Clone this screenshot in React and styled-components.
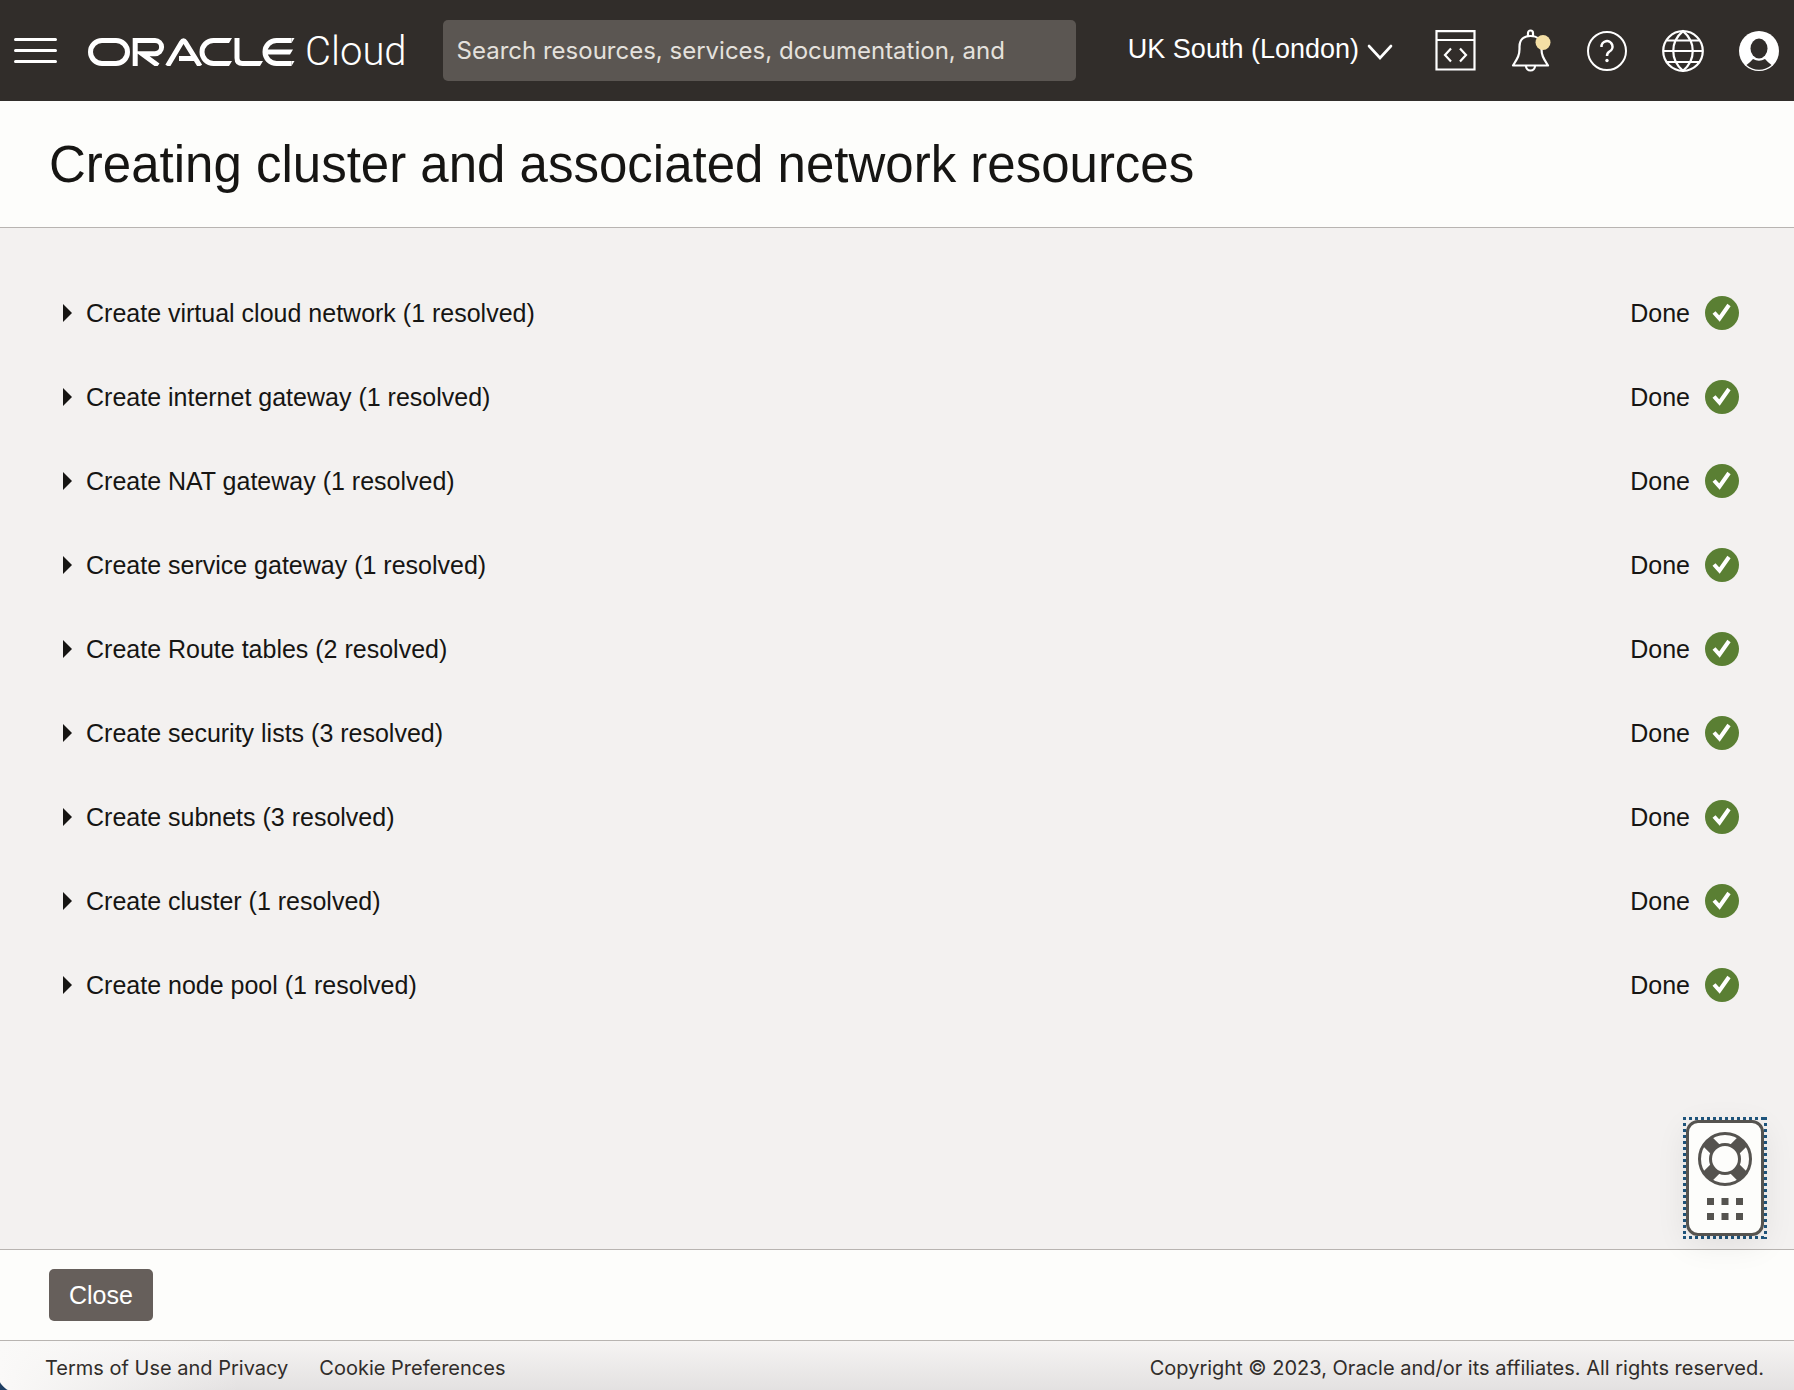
import React, { useState } from "react";
import styled, { createGlobalStyle } from "styled-components";

const sans = '"Liberation Sans", Arial, sans-serif';
const ui = 'Inter, "Open Sans", sans-serif';

const GlobalStyle = createGlobalStyle`
  *, *::before, *::after { box-sizing: border-box; }
  body { margin: 0; background: #f3f1f0; color: #161513; font-family: ${sans}; }
  button, input { font: inherit; }
  ul { list-style: none; margin: 0; padding: 0; }
`;

const Page = styled.div`
  min-height: 100vh;
  display: flex;
  flex-direction: column;
`;

const TopBar = styled.header`
  display: flex;
  align-items: center;
  height: 101px;
  padding: 0 13px;
  background: #312d2a;
  color: #fff;
`;

const IconButton = styled.button`
  display: flex;
  justify-content: center;
  width: 44px;
  padding: 0;
  border: 0;
  background: none;
  color: inherit;
  cursor: pointer;
`;

const Brand = styled.a`
  display: flex;
  align-items: center;
  gap: 10px;
  margin-left: 31px;
  padding-top: 2px;
  color: inherit;
  text-decoration: none;
`;

const BrandName = styled.span`
  font-family: Roboto, ${sans};
  font-weight: 300;
  font-size: 40px;
  line-height: 44px;
`;

const Search = styled.input`
  flex: 0 1 633px;
  min-width: 120px;
  height: 61px;
  margin-left: 36px;
  padding: 0 14px;
  border: 0;
  border-radius: 5px;
  background: #5b5652;
  color: #e4e1dd;
  font-family: ${ui};
  font-size: 24px;
  &::placeholder { color: #e4e1dd; opacity: 1; }
`;

const Tools = styled.div`
  display: flex;
  align-items: center;
  gap: 32px;
  margin-left: auto;
`;

const Region = styled.button`
  display: flex;
  align-items: center;
  gap: 8px;
  margin-right: 8px;
  padding: 0;
  border: 0;
  background: none;
  color: inherit;
  font-family: ${sans};
  font-size: 27px;
  line-height: 32px;
  white-space: nowrap;
  cursor: pointer;
`;

const RegionName = styled.span`
  padding-bottom: 3px;
`;

const TitleBar = styled.div`
  padding: 37px 49px 35px;
  border-bottom: 1px solid #b8b4b1;
  background: #fdfdfb;
`;

const Title = styled.h1`
  margin: 0;
  font-size: 51px;
  line-height: 54px;
  font-weight: 400;
`;

const Content = styled.main`
  flex: 1;
  padding: 43px 55px;
`;

const Row = styled.li`
  display: flex;
  align-items: center;
  justify-content: space-between;
  height: 84px;
  font-size: 25px;
  line-height: 32px;
`;

const Toggle = styled.button`
  display: flex;
  align-items: center;
  gap: 14px;
  padding: 0 8px;
  border: 0;
  background: none;
  color: inherit;
  cursor: pointer;
`;

const Status = styled.span`
  display: flex;
  align-items: center;
  gap: 15px;
`;

const ActionBar = styled.div`
  display: flex;
  padding: 19px 49px;
  border-top: 1px solid #b8b4b1;
  background: #fdfdfb;
`;

const CloseButton = styled.button`
  height: 52px;
  padding: 0 20px;
  border: 0;
  border-radius: 5px;
  background: #665f5b;
  color: #fff;
  font-family: ${sans};
  font-size: 25px;
  cursor: pointer;
`;

const Footer = styled.footer`
  display: flex;
  align-items: center;
  gap: 31px;
  height: 50px;
  padding: 5px 30px 0 45px;
  border-top: 1px solid #b8b4b1;
  background:
    radial-gradient(circle at 100% 0, transparent 23px, #1f3f63 24px) left bottom / 20px 20px no-repeat,
    linear-gradient(90deg, #faf9f8 0, rgba(250, 249, 248, 0) 240px),
    linear-gradient(#f6f4f3, #e3e1e1);
  color: #312d2a;
  font-family: ${ui};
  font-size: 20px;
  line-height: 24px;
`;

const FooterLink = styled.a`
  color: inherit;
  text-decoration: none;
`;

const Copyright = styled.span`
  margin-left: auto;
`;

const dotsAcross = "linear-gradient(90deg, #1f557d 3px, transparent 3px)";
const dotsDown = "linear-gradient(#1f557d 3px, transparent 3px)";

const Help = styled.button`
  position: fixed;
  right: 27px;
  bottom: 151px;
  display: flex;
  padding: 3px;
  border: 0;
  background:
    ${dotsAcross} left top / 6px 3px repeat-x,
    ${dotsAcross} left bottom / 6px 3px repeat-x,
    ${dotsDown} left top / 3px 6px repeat-y,
    ${dotsDown} right top / 3px 6px repeat-y;
  color: #55534f;
  cursor: pointer;
`;

const HelpCard = styled.span`
  display: flex;
  flex-direction: column;
  align-items: center;
  gap: 12px;
  width: 78px;
  height: 116px;
  padding: 9px 0;
  border: 3px solid #55534f;
  border-radius: 12px;
  background: #fdfdfb;
  box-shadow: 0 8px 32px rgba(0, 0, 0, 0.08);
`;

const steps = [
  ["Create virtual cloud network", 1],
  ["Create internet gateway", 1],
  ["Create NAT gateway", 1],
  ["Create service gateway", 1],
  ["Create Route tables", 2],
  ["Create security lists", 3],
  ["Create subnets", 3],
  ["Create cluster", 1],
  ["Create node pool", 1],
];

const OracleLogo = () => (
  <svg width="207" height="28" viewBox="0 0 207 28" fill="none" stroke="#fff" strokeWidth="5" aria-hidden="true">
    <rect x="2.5" y="2.5" width="37" height="23" rx="11.5" />
    <path d="M47.2 28V2.5H67a6.600 6.600 0 0 1 0 13.200H54L70 27.500" />
    <path d="M79.500 28L93.500 4.500Q95.500 1.200 97.500 4.500L112 28M91 20.500H106" />
    <path d="M141 2.500H125.500a11.500 11.500 0 0 0 0 23H141" />
    <path d="M149 0V20q0 5.500 5.500 5.500H172" />
    <path d="M203.500 2.500H188.500a11.500 11.500 0 0 0 0 23H203.500M178 14H202" />
    <path fill="#fff" stroke="none" d="M141 0h3l-3 5zM141 23h3l-3 5zM172 23h3l-3 5zM203.500 0h3l-3 5zM203.500 23h3l-3 5zM202 11.500h3l-3 5z" />
  </svg>
);

const MenuIcon = () => (
  <svg width="43" height="26" viewBox="0 0 43 26" stroke="#fff" strokeWidth="3" strokeLinecap="round">
    <path d="M1.500 1.500H41.500M1.500 12.500H41.500M1.500 23.500H41.500" />
  </svg>
);

const ChevronIcon = () => (
  <svg width="26" height="18" viewBox="0 0 26 18" fill="none" stroke="#fff" strokeWidth="2.600" strokeLinecap="round">
    <path d="M2 4L13 16L24 4" />
  </svg>
);

const DevIcon = () => (
  <svg width="41" height="42" viewBox="0 0 41 42" fill="none" stroke="#fff" strokeWidth="2.200">
    <path d="M1.500 1.200H39.500V39.500H1.500ZM1.500 10H39.500" />
    <path d="M16 18.500L10 25L16 31.500M25 18.500L31 25L25 31.500" />
  </svg>
);

const BellIcon = () => (
  <svg width="40" height="43" viewBox="0 0 40 43" fill="none" stroke="#fff" strokeWidth="2.200">
    <path d="M2 36.500C6 30 8.500 27 8.500 20V17.500C8.500 10.500 13 7 19.500 7S30.500 10.500 30.500 17.500V20C30.500 27 33 30 37 36.500Z" strokeLinejoin="round" />
    <path d="M17 7V4a2.500 2.500 0 0 1 5 0V7M15 37a4.500 4.500 0 0 0 9 0" />
    <circle cx="32" cy="13.500" r="7.500" fill="#f4dfa5" stroke="none" />
  </svg>
);

const QuestionIcon = () => (
  <svg width="42" height="42" viewBox="0 0 42 42" fill="none" stroke="#fff" strokeWidth="2">
    <circle cx="21" cy="21" r="19" />
    <path d="M15.500 17a5.500 5.500 0 1 1 8 4.500Q21 23 21 26" strokeWidth="2.500" />
    <circle cx="21" cy="30.500" r="1.700" fill="#fff" stroke="none" />
  </svg>
);

const GlobeIcon = () => (
  <svg width="42" height="43" viewBox="0 0 42 43" fill="none" stroke="#fff" strokeWidth="2.200">
    <circle cx="21" cy="22" r="19.800" />
    <path d="M21 2.200C8 13 8 31 21 41.800C34 31 34 13 21 2.200ZM1.500 22H40.500M5 11.500H37M5 33H37" />
  </svg>
);

const UserIcon = () => (
  <svg width="40" height="40" viewBox="0 0 40 40" aria-hidden="true">
    <circle cx="20" cy="20" r="20" fill="#fff" />
    <ellipse cx="20" cy="17.500" rx="8.500" ry="10" fill="#312d2a" />
    <path d="M14 28Q20 31.500 26 28Q29 31.500 32.500 34A18.800 18.800 0 0 1 7.500 34Q11 31.500 14 28Z" fill="#312d2a" />
  </svg>
);

const Caret = () => (
  <svg width="9" height="18" viewBox="0 0 9 18" aria-hidden="true">
    <path d="M0 0L9 9L0 18Z" fill="#161513" />
  </svg>
);

const DoneIcon = () => (
  <svg width="34" height="34" viewBox="0 0 34 34" fill="none" aria-hidden="true">
    <circle cx="17" cy="17" r="17" fill="#5a7f33" />
    <path d="M9 16.500L14.500 22.500L24 9" stroke="#fff" strokeWidth="4" />
  </svg>
);

const RingIcon = () => (
  <svg width="54" height="54" viewBox="0 0 54 54" fill="none" stroke="currentColor">
    <path strokeWidth="13" d="M17 17L9.500 9.500M37 17L44.500 9.500M17 37L9.500 44.500M37 37L44.500 44.500" />
    <circle cx="27" cy="27" r="25.500" strokeWidth="3" />
    <circle cx="27" cy="27" r="14.500" strokeWidth="3" fill="#fdfdfb" />
  </svg>
);

const GridIcon = () => (
  <svg width="36" height="22" viewBox="0 0 36 22" fill="currentColor">
    {[0, 14.5, 29].map((x) => (
      <path key={x} d={`M${x} 0h7v7h-7zM${x} 15h7v7h-7z`} />
    ))}
  </svg>
);

function Step({ name, count }) {
  const [open, setOpen] = useState(false);
  return (
    <Row>
      <Toggle aria-expanded={open} onClick={() => setOpen(!open)}>
        <Caret />
        {`${name} (${count} resolved)`}
      </Toggle>
      <Status>
        Done
        <DoneIcon />
      </Status>
    </Row>
  );
}

export default function App() {
  return (
    <Page>
      <GlobalStyle />
      <TopBar>
        <IconButton aria-label="Menu"><MenuIcon /></IconButton>
        <Brand href="#" aria-label="Oracle Cloud">
          <OracleLogo />
          <BrandName>Cloud</BrandName>
        </Brand>
        <Search type="search" aria-label="Search" placeholder="Search resources, services, documentation, and" />
        <Tools>
          <Region>
            <RegionName>UK South (London)</RegionName>
            <ChevronIcon />
          </Region>
          <IconButton aria-label="Developer tools"><DevIcon /></IconButton>
          <IconButton aria-label="Notifications"><BellIcon /></IconButton>
          <IconButton aria-label="Help"><QuestionIcon /></IconButton>
          <IconButton aria-label="Language"><GlobeIcon /></IconButton>
          <IconButton aria-label="Profile"><UserIcon /></IconButton>
        </Tools>
      </TopBar>
      <TitleBar>
        <Title>Creating cluster and associated network resources</Title>
      </TitleBar>
      <Content>
        <ul>
          {steps.map(([name, count]) => (
            <Step key={name} name={name} count={count} />
          ))}
        </ul>
      </Content>
      <ActionBar>
        <CloseButton>Close</CloseButton>
      </ActionBar>
      <Footer>
        <FooterLink href="#">Terms of Use and Privacy</FooterLink>
        <FooterLink href="#">Cookie Preferences</FooterLink>
        <Copyright>Copyright © 2023, Oracle and/or its affiliates. All rights reserved.</Copyright>
      </Footer>
      <Help aria-label="Support">
        <HelpCard>
          <RingIcon />
          <GridIcon />
        </HelpCard>
      </Help>
    </Page>
  );
}
